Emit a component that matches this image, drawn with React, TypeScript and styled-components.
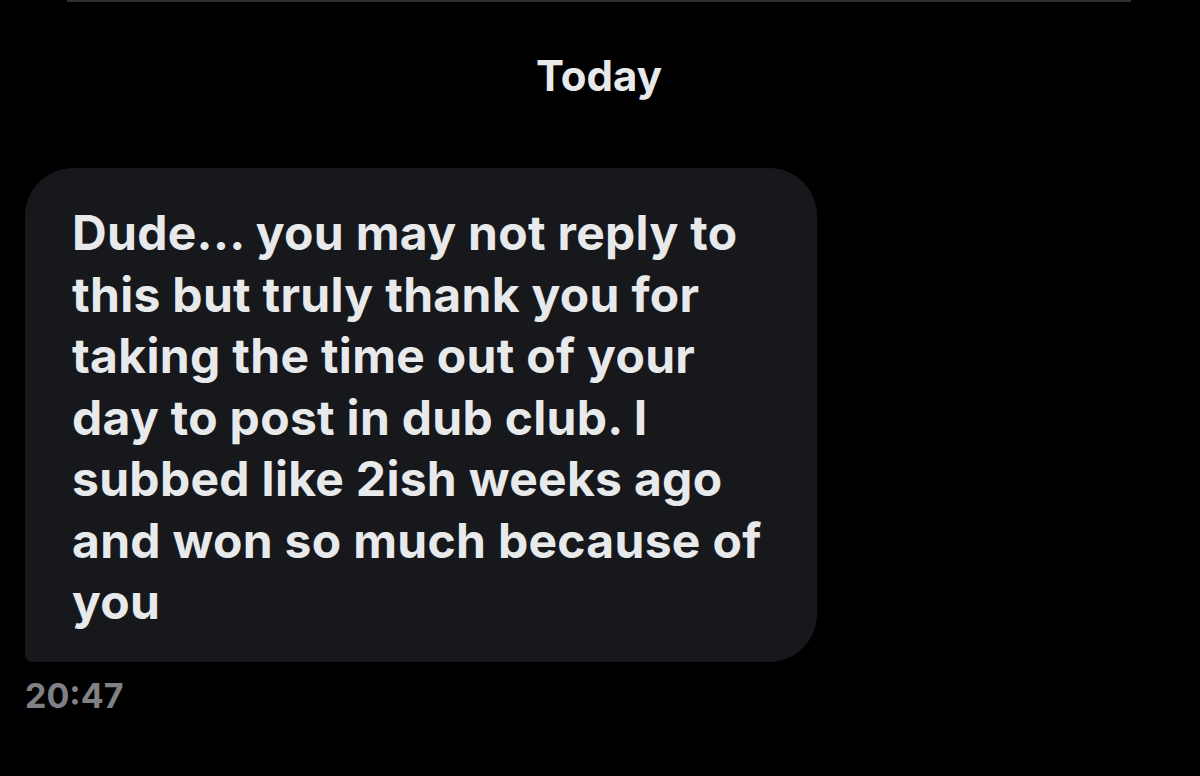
import React from "react";
import styled, { createGlobalStyle } from "styled-components";

const Global = createGlobalStyle`
  html, body { margin: 0; padding: 0; background: #000; }
  body { width: 1200px; height: 776px; overflow: hidden; }
`;

const Screen = styled.div`
  width: 1200px;
  height: 776px;
  background: #000;
  display: flex;
  flex-direction: column;
  font-family: Inter, "Noto Sans", sans-serif;
`;

const TopRule = styled.div`
  margin-left: 67px;
  width: 1064px;
  height: 2px;
  background: #2f3033;
`;

const DayLabel = styled.div`
  margin-top: 51px;
  align-self: center;
  transform: translateX(-1px);
  color: #e7e9ea;
  font-size: 42px;
  font-weight: 700;
  line-height: 46px;
`;

const Thread = styled.div`
  margin-top: 69px;
  padding-left: 25px;
  display: flex;
  flex-direction: column;
  align-items: flex-start;
`;

const Bubble = styled.div`
  width: 792px;
  height: 494px;
  box-sizing: border-box;
  padding: 34px 40px 0 47px;
  background: #16181c;
  border-radius: 48px 48px 48px 8px;
  color: #e7e9ea;
  font-size: 48px;
  font-weight: 700;
  line-height: 61.5px;
  letter-spacing: 0.3px;
`;

const Time = styled.div`
  margin-top: 14px;
  color: #808185;
  font-size: 34px;
  font-weight: 700;
  line-height: 40px;
`;

const lines = [
  "Dude... you may not reply to",
  "this but truly thank you for",
  "taking the time out of your",
  "day to post in dub club. I",
  "subbed like 2ish weeks ago",
  "and won so much because of",
  "you",
];

export default function App() {
  return (
    <>
      <Global />
      <Screen>
        <TopRule />
        <DayLabel>Today</DayLabel>
        <Thread>
          <Bubble>
            {lines.map((l, i) => (
              <React.Fragment key={i}>
                {l}
                {i < lines.length - 1 && <br />}
              </React.Fragment>
            ))}
          </Bubble>
          <Time>20:47</Time>
        </Thread>
      </Screen>
    </>
  );
}
